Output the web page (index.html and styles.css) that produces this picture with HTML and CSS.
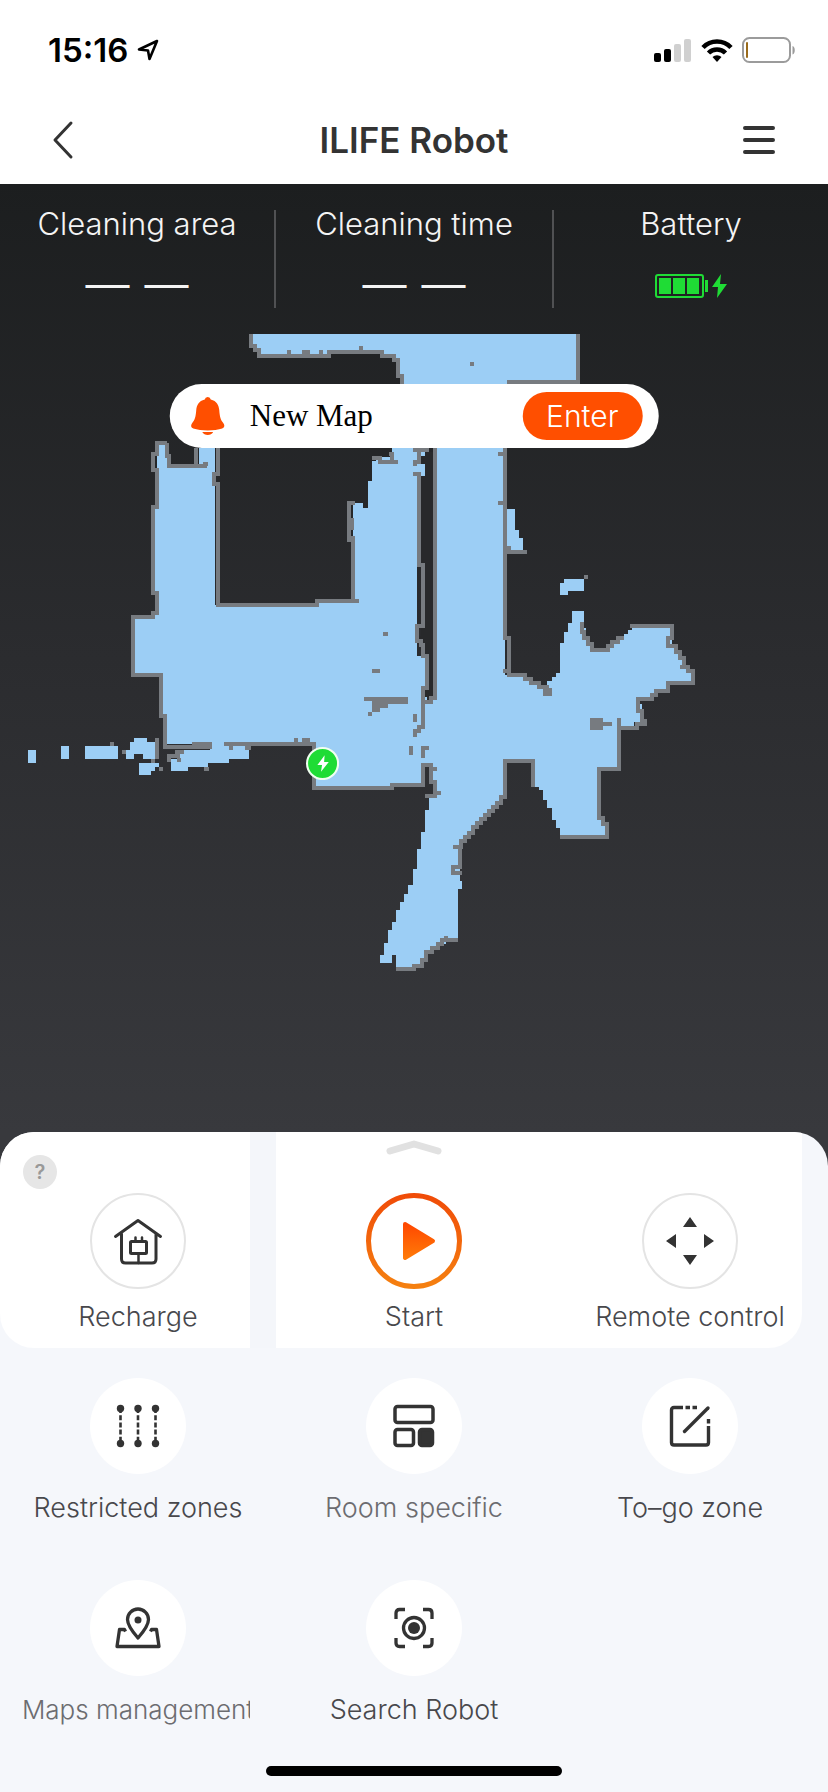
FILE: index.html
```html
<!DOCTYPE html>
<html lang="en">
<head>
<meta charset="utf-8">
<meta name="viewport" content="width=device-width, initial-scale=1">
<title>ILIFE Robot</title>
<link rel="stylesheet" href="styles.css">
</head>
<body>
<header class="top">
  <div class="status">
    <div class="status-left">
      <span class="clock">15:16</span>
      <svg width="24" height="24" viewBox="0 0 24 24" fill="none" stroke="#000" stroke-width="2.6" stroke-linejoin="round" aria-hidden="true"><path d="M21 3 3 11.500 12 12.500 13.500 21Z"/></svg>
    </div>
    <div class="status-right">
      <svg width="38" height="26" viewBox="0 0 38 26" aria-hidden="true">
        <rect y="16" width="7" height="9" rx="2"/><rect x="10" y="12" width="7" height="13" rx="2"/>
        <g fill="#d0d0d0"><rect x="20" y="7" width="7" height="18" rx="2"/><rect x="30" y="2" width="7" height="23" rx="2"/></g>
      </svg>
      <svg width="32" height="26" viewBox="0 0 32 26" fill="none" stroke="#000" stroke-width="4.600" aria-hidden="true"><path d="M2 10.500a19.500 19.500 0 0 1 28 0M7.500 16a12 12 0 0 1 17 0"/><path d="M16 25l-4.500-5a6.500 6.500 0 0 1 9 0z" fill="#000" stroke="none"/></svg>
      <svg width="54" height="26" viewBox="0 0 54 26" aria-hidden="true"><rect x="1" y="1" width="47" height="24" rx="6.500" fill="none" stroke="#9b9b9b" stroke-width="2"/><path d="M50.500 9c3 1 3 7.500 0 8.500z" fill="#9b9b9b"/><rect x="4" y="5" width="2" height="16" rx="1" fill="#9a6b1c"/></svg>
    </div>
  </div>
  <nav class="nav">
    <button class="icon-btn" aria-label="Back"><svg width="24" height="40" viewBox="0 0 24 40" fill="none" stroke="#333" stroke-width="3" stroke-linecap="round" stroke-linejoin="round"><path d="M19 3 3 20 19 37"/></svg></button>
    <h1 class="title">ILIFE Robot</h1>
    <button class="icon-btn menu-btn" aria-label="Menu"><svg width="34" height="30" viewBox="0 0 34 30" stroke="#333" stroke-width="4" stroke-linecap="round"><path d="M3 3H31M3 15H31M3 27H31"/></svg></button>
  </nav>
</header>

<main class="main">
<section class="scene">
  <div class="stats">
    <div class="stat"><span class="stat-name">Cleaning area</span><span class="stat-value"><span>—</span><span>—</span></span></div>
    <div class="stat"><span class="stat-name">Cleaning time</span><span class="stat-value"><span>—</span><span>—</span></span></div>
    <div class="stat"><span class="stat-name">Battery</span><span class="stat-value charge">
      <svg width="74" height="26" viewBox="0 0 74 26" fill="#1fdc35" role="img" aria-label="Charging"><rect x="2" y="2" width="47" height="22" rx="2" fill="none" stroke="#1fdc35" stroke-width="2"/><path d="M5 5h12v16H5zM19 5h12v16H19zM33 5h12v16H33zM51 7h3v12h-3zM67 1l-9 13h6l-1 11 10-14h-7z"/></svg>
    </span></div>
  </div>
  <div class="map">
    <svg class="map-drawing" viewBox="0 330 828 802" shape-rendering="crispEdges" role="img" aria-label="Floor map">
      <g fill="#9ccef5">
        <path d="M251 334H577V384H404V374H399V358H395V354H257V345H251Z"/>
        <path d="M157 443H167V456H171V466H199V448H215V605H317V601H353V503H363V508H368V481H372V461H376V457H392V448H417V656H427V700H435V448H505V675H525V679H531V685H547V681H552V677H556V673H560V643H564V632H568V623H572V611H584V628H586V636H590V646H594V650H606V646H610V642H618V638H624V634H628V630H632V626H672V644H676V650H680V658H684V666H688V672H692V681H668V690H656V694H650V698H640V704H642V722H634V728H619V769H599V818H605V837H560V828H556V820H552V808H547V800H543V790H539V787H535V761H505V797H502V803H498V807H494V811H490V815H486V819H482V823H478V827H474V833H470V837H466V841H462V845H460V881H462V889H458V938H446V944H438V948H432V952H426V960H422V966H414V970H396V955H392V963H380V955H384V943H388V930H392V922H396V910H400V902H404V894H408V885H413V869H417V849H421V832H425V810H429V797H435V782H431V765H423V785H390V789H314V744H165V717H161V675H132V617H155V595H153V505H157Z"/>
        <path d="M507 509H515V530H519V538H523V550H507ZM560 583H564V579H584V591H568V595H560Z"/>
        <path d="M28 750H36V763H28ZM61 746H69V759H61ZM85 746H118V759H85ZM126 750H130V742H134V738H147V742H155V759H143V754H134V759H126ZM139 763H151V759H155V763H159V767H155V771H151V775H139ZM171 759H179V754H184V750H224V746H249V759H229V763H208V767H188V771H171Z"/>
        <path d="M210 742H226V750H210Z"/>
      </g>
      <g fill="#28292b"><path d="M421 452H433V697H425V656H421Z"/><path d="M377 701h6v3h-6zM417 636h4v4h-4z"/></g>
      <g fill="#9ccef5"><path d="M413 464H425V476H417V470H413ZM421 452h4v4h-4z"/></g>
      <g fill="none" stroke="#777b80" stroke-width="4" stroke-linejoin="miter">
        <path d="M251 334V346H255V350H259V356H329V352H382V356H394V360H398V376H402V384M578 334V382H507"/>
        <path d="M167 443H157V454H153V470H157V507H153V593H157V613H153V617H133V675H161V716H165V747H212M192 744H212M167 443V456H169V466H207M196 448V466M203 464H208M218 448V474H214V484H218V605H317V601H359M353 601V540H349V503H355M352 518V530M353 540V536"/>
        <path d="M372 458H380V462H398M392 460V454H389M413 450H429M415 466V462H419V450M413 474H419V565H423V626H417V641H421V645H423V656H427V688H423V727H419V731H415V737"/>
        <path d="M435 448V698H431V702H421M415 714V722M411 746V755M421 748H429M423 746V758"/>
        <path d="M224 744H314V788H392V785H423V765H431V782H435V796H425M437 769H431M441 793H433M294 740H298M302 740H310"/>
        <path d="M505 448V638H509V671H503M507 675H525V679H531V683H539V687H549M543 690H552M543 694H552M498 454H504M498 503H504M507 552H527M507 548H511M584 577h4"/>
        <path d="M582 622V632H584V638H588V644H592V650H608V646H612V642H618V638H624M630 626H672V638H668V646H676V652H680V658H684V667H680V667H688V671H693V683H668V691H656V695H652V699H638V711H642V721H645V724H637V728H621M619 718V769H599V818H603V824H607V837H560"/>
        <path d="M592 720H601V728H592ZM592 724H612"/>
        <path d="M533 787V761H505V797H501V803H497V807H493V811H489V815H485V819H481V823H477V827H473V833H469V837H465V841H461V847H453M460 847V867H453V873H462M458 940H446V936V940H442V944H438V948H432V952H426V960H422V966H414V969H396"/>
        <path d="M364 699H408M372 702H408M372 706H388M372 710H380M368 714H372M372 671H380M383 634H388M289 354V350M302 352H310M304 354H308M321 350V355M361 346V352M470 364H474"/>
        <path d="M110 744H114M122 752H126M157 738V759M151 761H155M159 769H163M167 756H180M167 760H171M175 752H184M179 758V762M229 748H233M245 748H251M204 769H209"/>
      </g>
    </svg>
    <svg class="dock" viewBox="0 0 32 32" role="img" aria-label="Charging dock"><circle cx="16" cy="16" r="15" fill="#1fdc35" stroke="#f0fff0" stroke-width="2"/><path d="M18 8 11 17.500h4.500L14.500 24 22 14.500H17.500Z" fill="#fff"/></svg>
    <div class="notice">
      <svg width="36" height="40" viewBox="0 0 36 40" fill="#ff4f00" aria-hidden="true"><path d="M18 1a3 3 0 0 1 3 2.500C27 5 29 9 29.500 14c.5 7 1.500 10 4 13 2 3 1 4.500-1 5.500-8 2.500-21 2.500-29 0-2-1-3-2.500-1-5.500 2.500-3 3.500-6 4-13C7 9 9 5 15 3.500A3 3 0 0 1 18 1ZM12.500 36h11c-2 4-9 4-11 0Z"/></svg>
      <span class="notice-text">New Map</span>
      <button class="enter">Enter</button>
    </div>
  </div>
</section>

<section class="panel">
  <div class="primary">
    <button class="help" aria-label="Help">?</button>
    <svg class="handle" width="56" height="16" viewBox="0 0 56 16" fill="none" stroke="#e1e1e1" stroke-width="7" stroke-linecap="round" stroke-linejoin="round" aria-hidden="true"><path d="M4 12 28 5 52 12"/></svg>
    <div class="actions">
      <button class="action">
        <span class="disc ringed"><svg width="52" height="52" viewBox="0 0 52 52" fill="none" stroke="#333" stroke-width="3" stroke-linecap="round" stroke-linejoin="round"><path d="M3.500 21.500 26 5.500 48.500 21.500M9.500 19V44q0 4 4 4H40q4 0 4-4V19"/><rect x="18.500" y="26.500" width="16" height="12" rx="1"/><path d="M23.500 22.500V26M30 22.500V26M26.500 39V48" stroke-width="2.500"/></svg></span>
        <span class="label">Recharge</span>
      </button>
      <button class="action">
        <span class="disc"><svg width="96" height="96" viewBox="0 0 96 96"><defs><linearGradient id="ring" x1="0" y1="0" x2="0" y2="1"><stop offset="0" stop-color="#f04c08"/><stop offset="1" stop-color="#f58010"/></linearGradient><linearGradient id="play" x1="0" y1="0" x2="0" y2="1"><stop offset="0" stop-color="#ff4800"/><stop offset="1" stop-color="#ff7a08"/></linearGradient></defs><circle cx="48" cy="48" r="45.500" fill="none" stroke="url(#ring)" stroke-width="5"/><path d="M39 31 67 48 39 65Z" fill="url(#play)" stroke="url(#play)" stroke-width="4" stroke-linejoin="round"/></svg></span>
        <span class="label">Start</span>
      </button>
      <button class="action">
        <span class="disc ringed"><svg width="52" height="52" viewBox="0 0 52 52" fill="#333"><path d="M26 2l7 10H19zM26 50l7-10H19zM2 26l10-7v14zM50 26l-10-7v14z"/></svg></span>
        <span class="label">Remote control</span>
      </button>
    </div>
  </div>
  <div class="actions secondary">
    <button class="action">
      <span class="disc"><svg width="48" height="48" viewBox="0 0 48 48" fill="#333"><path d="M6.500 6V42M24 6V42M41.500 6V42" stroke="#333" stroke-width="2.600" stroke-dasharray="5 2.200"/><g><circle cx="6.500" cy="6.500" r="3.700"/><circle cx="24" cy="6.500" r="3.700"/><circle cx="41.500" cy="6.500" r="3.700"/><circle cx="6.500" cy="41.500" r="3.700"/><circle cx="24" cy="41.500" r="3.700"/><circle cx="41.500" cy="41.500" r="3.700"/></g></svg></span>
      <span class="label">Restricted zones</span>
    </button>
    <button class="action">
      <span class="disc"><svg width="48" height="48" viewBox="0 0 48 48" fill="none" stroke="#333" stroke-width="3.500"><rect x="5" y="4.500" width="38" height="16" rx="2.500"/><rect x="5" y="27.500" width="18.500" height="16" rx="2.500"/><rect x="29.500" y="27.500" width="13" height="16" rx="2.500" fill="#333"/></svg></span>
      <span class="label muted">Room specific</span>
    </button>
    <button class="action">
      <span class="disc"><svg width="48" height="48" viewBox="0 0 48 48" fill="none" stroke="#333" stroke-width="3.400"><path d="M17 5.500H8Q5.500 5.500 5.500 8V40.500Q5.500 43 8 43H40Q42.500 43 42.500 40.500V24M19.500 5.500h4.500M26.500 5.500h4.500M42.500 17v4.500"/><path d="M18.500 29.500 42 6" stroke-linecap="round"/></svg></span>
      <span class="label">To–go zone</span>
    </button>
    <button class="action">
      <span class="disc"><svg width="48" height="48" viewBox="0 0 48 48" fill="none" stroke="#333" stroke-width="3.300" stroke-linejoin="round"><path d="M24 34C17 26 13.500 21 13.500 15.500a10.500 10.500 0 0 1 21 0C34.500 21 31 26 24 34Z"/><circle cx="24" cy="16" r="3.500" fill="#333" stroke="none"/><path d="M11.500 27.500 10.500 25.500H5.500L3 42.500H45L42.500 25.500H37.500L36.500 27.500"/></svg></span>
      <span class="label muted clipped">Maps management</span>
    </button>
    <button class="action">
      <span class="disc"><svg width="48" height="48" viewBox="0 0 48 48" fill="none" stroke="#333" stroke-width="3.300"><path d="M6 15V9q0-3.500 3.500-3.500H15M33 5.500h5.500Q42 5.500 42 9v6M42 34v5q0 3.500-3.500 3.500H33M15 42.500H9.500Q6 42.500 6 39V34"/><circle cx="24" cy="24" r="10.500"/><circle cx="24" cy="24" r="6" fill="#333" stroke="none"/></svg></span>
      <span class="label">Search Robot</span>
    </button>
  </div>
  <div class="home-bar"></div>
</section>
</main>
</body>
</html>
```

FILE: styles.css
```css
* { box-sizing: border-box; }

body {
  margin: 0;
  background: #f5f7fb;
  color: #333;
  font-family: Inter, "Noto Sans CJK SC", sans-serif;
}

button {
  border: 0;
  padding: 0;
  background: none;
  color: inherit;
  font: inherit;
}

svg { display: block; flex: none; }

.top { background: #fff; }

.status {
  display: flex;
  justify-content: space-between;
  align-items: center;
  height: 100px;
  padding: 0 32px 0 48px;
  color: #000;
}

.status-left { display: flex; align-items: center; gap: 8px; }
.status-right { display: flex; align-items: center; gap: 9px; }
.clock { font-size: 33px; font-weight: 600; line-height: 40px; }

.nav {
  display: grid;
  grid-template-columns: 1fr auto 1fr;
  align-items: center;
  height: 84px;
  padding: 0 52px 4px;
}

.icon-btn { display: flex; align-items: center; height: 48px; }
.menu-btn { justify-self: end; }
.title { margin: 0; font-size: 35px; font-weight: 600; line-height: 40px; }

.main { background: #38393d; }

.scene {
  background: linear-gradient(#1c1e1f, #2b2c2f 50%, #38393d);
  color: #f4f4f4;
}

.stats {
  display: grid;
  grid-template-columns: repeat(3, 1fr);
  height: 146px;
  padding: 26px 0 22px;
}

.stat {
  display: flex;
  flex-direction: column;
  align-items: center;
}

.stat:first-child { border-right: 2px solid #505153; }
.stat:last-child { border-left: 2px solid #505153; }
.stat-name { font-size: 31px; font-weight: 300; line-height: 28px; }

.stat-value {
  display: flex;
  align-items: center;
  gap: 15px;
  height: 44px;
  margin-top: 23px;
  font: 44px/44px "Liberation Sans", sans-serif;
}

.charge { margin-top: 26px; }

.map { position: relative; }
.map-drawing { width: 100%; height: auto; }

.dock {
  position: absolute;
  left: 37%;
  top: 52%;
  width: 4%;
}

.notice {
  position: absolute;
  top: 54px;
  left: 50%;
  transform: translateX(-50%);
  display: flex;
  align-items: center;
  width: 59%;
  height: 64px;
  padding: 0 16px 0 20px;
  border-radius: 32px;
  background: #fff;
}

.notice-text {
  flex: 1;
  margin-left: 24px;
  color: #000;
  font: 31px/40px "Liberation Serif", serif;
}

.enter {
  width: 120px;
  height: 48px;
  border-radius: 24px;
  background: #ff4f00;
  color: #fff;
  font-size: 30px;
  font-weight: 300;
  line-height: 48px;
}

.panel {
  overflow: hidden;
  border-radius: 34px 34px 0 0;
  background: #f5f7fb;
}

.primary {
  position: relative;
  height: 216px;
  margin-right: 26px;
  padding-top: 61px;
  border-radius: 0 0 34px 34px;
  background: linear-gradient(90deg, #fff calc((100% + 26px) / 3 - 26px), #f4f6fa 0, #f4f6fa calc((100% + 26px) / 3), #fff 0);
}

.help {
  position: absolute;
  left: 23px;
  top: 23px;
  width: 34px;
  height: 34px;
  border-radius: 50%;
  background: #e6e6e6;
  color: #999;
  font-size: 20px;
  font-weight: 600;
}

.handle {
  position: absolute;
  left: calc(50% + 13px);
  top: 7px;
  transform: translateX(-50%);
}

.actions {
  display: grid;
  grid-template-columns: repeat(3, 1fr);
}

.primary .actions { margin-right: -26px; }

.action {
  display: flex;
  flex-direction: column;
  align-items: center;
  gap: 12px;
}

.disc {
  display: flex;
  align-items: center;
  justify-content: center;
  width: 96px;
  height: 96px;
  border-radius: 50%;
  background: #fff;
}

.ringed { border: 2px solid #e4e4e4; }

.label {
  display: flex;
  justify-content: center;
  width: 100%;
  color: #48484c;
  font-size: 27px;
  font-weight: 300;
  line-height: 32px;
  white-space: nowrap;
}

.secondary { padding-top: 30px; row-gap: 56px; }
.secondary .action { gap: 18px; }
.muted { color: #6c6c70; }
.clipped { font-size: 26px; clip-path: inset(0 26px 0 0); }

.home-bar {
  width: 296px;
  height: 10px;
  margin: 40px auto 16px;
  border-radius: 5px;
  background: #000;
}
```
